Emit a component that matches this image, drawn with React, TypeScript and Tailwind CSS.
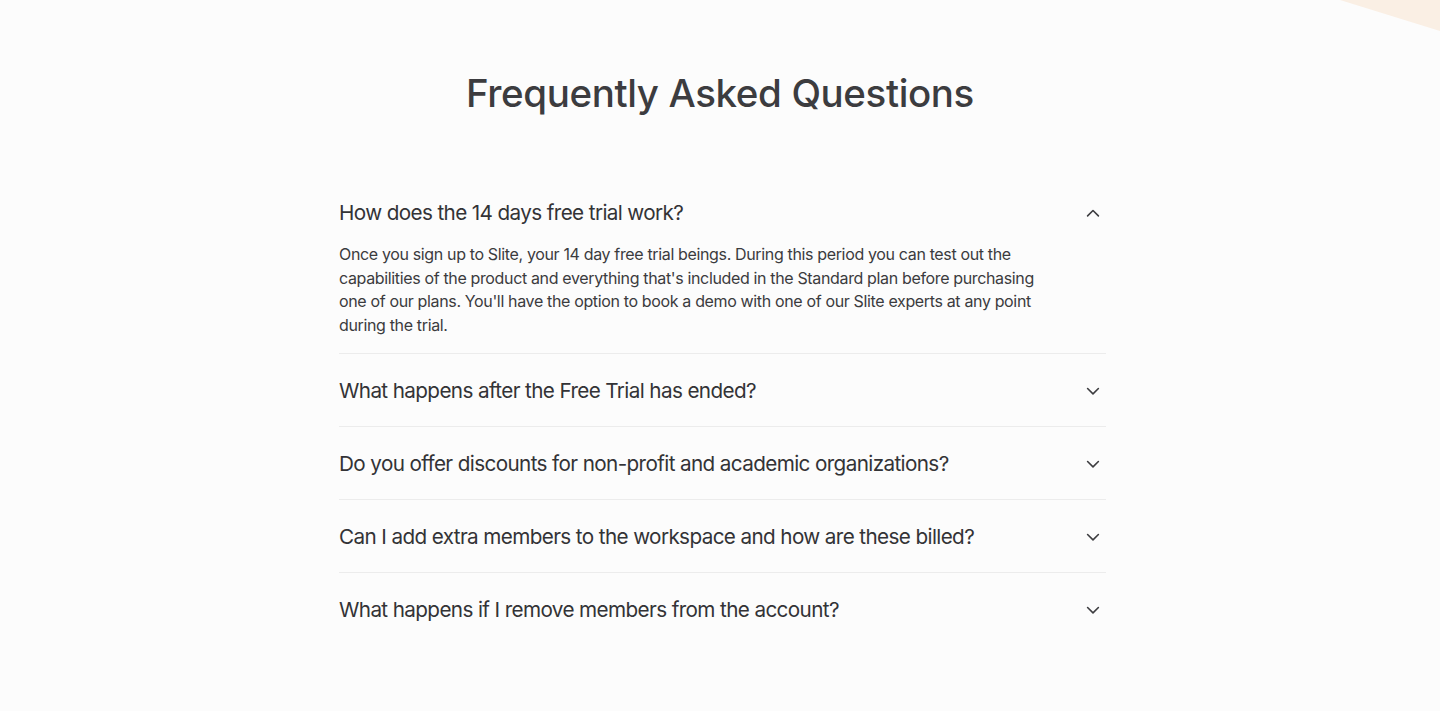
import React, { useState } from "react";

const items = [
  {
    q: "How does the 14 days free trial work?",
    a: "Once you sign up to Slite, your 14 day free trial beings. During this period you can test out the capabilities of the product and everything that's included in the Standard plan before purchasing one of our plans. You'll have the option to book a demo with one of our Slite experts at any point during the trial.",
  },
  { q: "What happens after the Free Trial has ended?", a: "" },
  { q: "Do you offer discounts for non-profit and academic organizations?", a: "" },
  { q: "Can I add extra members to the workspace and how are these billed?", a: "" },
  { q: "What happens if I remove members from the account?", a: "" },
];

function Chevron({ up }: { up: boolean }) {
  return (
    <svg width="14" height="14" viewBox="0 0 14 14" fill="none" className="text-[#3d3d40]">
      {up ? (
        <path d="M1.6 9.9 L7 4.5 L12.4 9.9" stroke="currentColor" strokeWidth="1.6" strokeLinecap="round" strokeLinejoin="round" />
      ) : (
        <path d="M1.6 4.5 L7 9.9 L12.4 4.5" stroke="currentColor" strokeWidth="1.6" strokeLinecap="round" strokeLinejoin="round" />
      )}
    </svg>
  );
}

export default function App() {
  const [open, setOpen] = useState<number>(0);
  return (
    <div
      className="relative min-h-[711px] w-full overflow-hidden bg-[#fcfcfc] text-[#3b3b3e]"
      style={{ fontFamily: "Inter, 'Noto Sans', sans-serif" }}
    >
      <svg className="absolute right-0 top-0" width="100" height="32" viewBox="0 0 100 32">
        <polygon points="0,0 100,0 100,31" fill="#faefe4" />
      </svg>
      <h1 className="pt-[66px] text-center text-[38.5px] font-medium leading-[54px] tracking-[-0.01em] text-[#3c3c3f]">
        Frequently Asked Questions
      </h1>
      <div className="ml-[calc(50%-381px)] mt-[56px] w-[767px]">
        {items.map((it, i) => (
          <div key={i} className={i < items.length - 1 ? "border-b border-[#ececec]" : ""}>
            <button
              className="flex w-full items-center justify-between pb-[21px] pt-[23px] text-left"
              onClick={() => setOpen(open === i ? -1 : i)}
            >
              <span className="text-[20.7px] leading-[28px] tracking-[-0.03em] text-[#333336]">{it.q}</span>
              <span className="mr-[6px]">
                <Chevron up={open === i} />
              </span>
            </button>
            {open === i && it.a && (
              <p className="-mt-[5px] mb-[16px] max-w-[700px] text-[16px] leading-[23.6px] tracking-[-0.022em] text-[#3b3b3e]">
                {it.a}
              </p>
            )}
          </div>
        ))}
      </div>
    </div>
  );
}
